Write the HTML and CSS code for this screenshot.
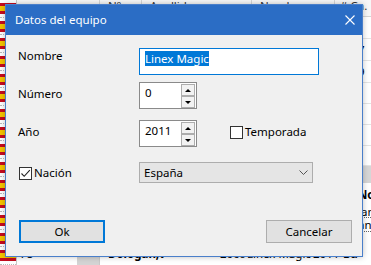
FILE: index.html
```html
<!DOCTYPE html>
<html lang="es">
<head>
<meta charset="utf-8">
<title>Datos del equipo</title>
<link rel="stylesheet" href="styles.css">
</head>
<body>
<div class="desk">
  <div class="sheet">
    <div class="flags">
      <div class="flag"><i></i></div><div class="flag"><i></i></div><div class="flag"><i></i></div>
      <div class="flag"><i></i></div><div class="flag"><i></i></div><div class="flag"><i></i></div>
      <div class="flag"><i></i></div><div class="flag"><i></i></div><div class="flag"><i></i></div>
      <div class="flag"><i></i></div><div class="flag"><i></i></div><div class="flag"><i></i></div>
      <div class="flag"><i></i></div><div class="flag"><i></i></div><div class="flag"><i></i></div>
    </div>
    <div class="main">
      <div class="hdr">
        <div class="c c1"></div>
        <div class="c c2">Nº</div>
        <div class="c c3">Apellido</div>
        <div class="c c4">Nombre</div>
        <div class="c c5"># Ca.</div>
      </div>
      <div class="row"><div class="c c1"></div><div class="c c2"></div><div class="c c3"></div><div class="c c4"></div><div class="c c5 num">1</div></div>
      <div class="row"><div class="c c1"></div><div class="c c2"></div><div class="c c3"></div><div class="c c4"></div><div class="c c5 num">7</div></div>
      <div class="row"><div class="c c1"></div><div class="c c2"></div><div class="c c3"></div><div class="c c4"></div><div class="c c5 num">9</div></div>
      <div class="row"><div class="c c1"></div><div class="c c2"></div><div class="c c3"></div><div class="c c4"></div><div class="c c5 num"></div></div>
      <div class="row"><div class="c c1"></div><div class="c c2"></div><div class="c c3"></div><div class="c c4"></div><div class="c c5 num"></div></div>
      <div class="row"><div class="c c1"></div><div class="c c2"></div><div class="c c3"></div><div class="c c4"></div><div class="c c5 num"></div></div>
      <div class="row"><div class="c c1"></div><div class="c c2"></div><div class="c c3"></div><div class="c c4"></div><div class="c c5 num"></div></div>
      <div class="band"></div>
      <div class="sub sub-h"><span>Nombre</span></div>
      <div class="sub sub-r"><span>lan</span></div>
      <div class="sub sub-r"><span>an</span></div>
      <div class="spacer"></div>
      <div class="last">
        <div class="l1"><span>78</span><i></i></div>
        <div class="l2">Dologan,V</div>
        <div class="l3">2009</div>
        <div class="l4">Linex Magic</div>
        <div class="l5">2011</div>
        <div class="l6">Ba</div>
      </div>
    </div>
  </div>

  <div class="dialog">
    <div class="titlebar">
      <span class="title">Datos del equipo</span>
      <svg class="close" width="10" height="10" viewBox="0 0 10 10"><path d="M0.5 0.5 L9.5 9.5 M9.5 0.5 L0.5 9.5" stroke="#fff" stroke-width="1.1" fill="none"/></svg>
    </div>
    <div class="body">
      <div class="frow r-nombre">
        <div class="lbl">Nombre</div>
        <div class="text-input"><span class="sel">Linex Magic</span></div>
      </div>
      <div class="frow r-numero">
        <div class="lbl lbl-spin">Número</div>
        <div class="spin">
          <div class="spin-val">0</div>
          <div class="spin-btns"><div class="spin-btn"><i class="up"></i></div><div class="spin-btn"><i class="down"></i></div></div>
        </div>
      </div>
      <div class="frow r-anio">
        <div class="lbl lbl-spin">Año</div>
        <div class="spin">
          <div class="spin-val">2011</div>
          <div class="spin-btns"><div class="spin-btn"><i class="up"></i></div><div class="spin-btn"><i class="down"></i></div></div>
        </div>
        <div class="check temporada"><span class="box"></span><span class="ctext">Temporada</span></div>
      </div>
      <div class="frow r-nacion">
        <div class="lbl"><div class="check nacion"><span class="box"><svg width="11" height="11" viewBox="0 0 11 11"><path d="M1.5 5.5 L4.2 8.3 L9.8 2.2" stroke="#222" stroke-width="1.1" fill="none"/></svg></span><span class="ctext">Nación</span></div></div>
        <div class="combo"><span>España</span><svg width="9" height="5" viewBox="0 0 9 5"><path d="M0.5 0.5 L4.5 4.5 L8.5 0.5" stroke="#555" stroke-width="1" fill="none"/></svg></div>
      </div>
      <div class="buttons">
        <div class="btn btn-default">Ok</div>
        <div class="btn">Cancelar</div>
      </div>
    </div>
  </div>
</div>
</body>
</html>
```

FILE: styles.css
```css
* { box-sizing: border-box; }
html, body { margin: 0; padding: 0; }
body {
  width: 371px;
  height: 265px;
  overflow: hidden;
  background: #fff;
  color: #000;
  font-family: "Noto Sans", "DejaVu Sans", sans-serif;
  font-size: 11.5px;
  line-height: 16px;
}
.desk { position: relative; width: 371px; height: 265px; overflow: hidden; }

/* background spreadsheet */
.sheet { display: flex; height: 100%; }
.flags {
  width: 22px;
  display: flex;
  flex-direction: column;
  border-right: 1px solid #c9c9c9;
}
.flag { height: 18px; display: flex; align-items: center; border-bottom: 1px dotted #bbb; }
.flag i {
  display: block;
  width: 16px;
  height: 11px;
  background: linear-gradient(#c60b1e 0 27%, #f5c400 27% 73%, #c60b1e 73% 100%);
}
.main { flex: 1; display: flex; flex-direction: column; }
.hdr, .row { display: flex; }
.hdr { height: 18px; background: #f7f7f7; border-bottom: 1px solid #d5d5d5; color: #333; }
.row { height: 22px; border-bottom: 1px solid #e4e4e4; }
.c { border-right: 1px solid #d5d5d5; white-space: nowrap; overflow: hidden; padding-left: 8px; line-height: 12px; }
.c1 { width: 83px; }
.c2 { width: 42px; }
.c3 { width: 110px; }
.c4 { width: 83px; }
.c5 { flex: 1; border-right: 0; padding-left: 5px; }
.row .c { line-height: 22px; }
.num { padding-left: 23px; }
.band { height: 18px; background: #d6d6d6; }
.sub { height: 14px; padding-left: 341px; white-space: nowrap; overflow: hidden; line-height: 14px; border-bottom: 1px dotted #666; }
.sub-h { height: 23px; line-height: 23px; font-weight: bold; border-bottom: 0; }
.spacer { height: 12px; }
.last { display: flex; height: 22px; white-space: nowrap; line-height: 22px; }
.l1 { width: 83px; display: flex; justify-content: space-between; padding-left: 3px; border-right: 1px solid #c9c9c9; }
.l1 i { display: block; width: 22px; background: #d4d4d4; }
.l2 { width: 120px; padding-left: 8px; font-weight: bold; }
.l3 { width: 27px; }
.l4 { width: 66px; }
.l5 { width: 30px; }
.l6 { flex: 1; font-weight: bold; }

/* dialog */
.dialog {
  position: absolute;
  left: 5px;
  top: 4px;
  width: 358px;
  height: 253px;
  background: #f0f0f0;
  border: 1px solid #4a7fca;
  box-shadow: 0 0 6px rgba(0, 0, 0, 0.25);
  display: flex;
  flex-direction: column;
}
.titlebar {
  height: 30px;
  background: #2b6dc5;
  color: #fff;
  display: flex;
  align-items: center;
  justify-content: space-between;
  padding: 0 7px 0 9px;
}
.close { display: block; }
.body { flex: 1; padding: 13px 10px 0 12px; display: flex; flex-direction: column; }
.frow { display: flex; align-items: flex-start; }
.lbl { width: 121px; flex: none; }
.lbl-spin { padding-top: 4px; }
.r-numero { margin-top: 7px; }
.r-anio { margin-top: 11px; }
.r-nacion { margin-top: 15px; }

.text-input {
  width: 180px;
  height: 27px;
  background: #fff;
  border: 1px solid #0078d7;
  padding: 2px 0 0 5px;
  line-height: 15px;
}
.sel { background: #0078d7; color: #fff; display: inline-block; }

.spin {
  width: 58px;
  height: 27px;
  display: flex;
  background: #fff;
  border: 1px solid #8a8a8a;
}
.spin-val { flex: 1; padding: 2px 0 0 5px; }
.spin-btns { width: 15px; display: flex; flex-direction: column; padding: 1px 1px 0 0; }
.spin-btn {
  height: 12px;
  border: 1px solid #adadad;
  background: #f2f2f2;
  display: flex;
  align-items: center;
  justify-content: center;
}
.up { width: 0; height: 0; border-left: 3px solid transparent; border-right: 3px solid transparent; border-bottom: 3px solid #000; }
.down { width: 0; height: 0; border-left: 3px solid transparent; border-right: 3px solid transparent; border-top: 3px solid #000; }

.check { display: flex; align-items: flex-start; }
.box {
  width: 13px;
  height: 13px;
  background: #fff;
  border: 1px solid #333;
  flex: none;
  display: flex;
  align-items: center;
  justify-content: center;
}
.ctext { margin-left: 2px; margin-top: -2px; }
.temporada { margin: 6px 0 0 33px; }
.nacion { margin: 5px 0 0 1px; }

.combo {
  width: 174px;
  height: 21px;
  background: #e5e5e5;
  border: 1px solid #adadad;
  display: flex;
  align-items: center;
  justify-content: space-between;
  padding: 0 4px 0 4px;
}
.combo svg { display: block; }

.buttons { display: flex; justify-content: space-between; margin-top: 37px; padding-left: 1px; }
.btn {
  width: 86px;
  height: 23px;
  background: #e1e1e1;
  border: 1px solid #adadad;
  display: flex;
  align-items: center;
  justify-content: center;
}
.btn-default { border: 2px solid #0078d7; }
```
